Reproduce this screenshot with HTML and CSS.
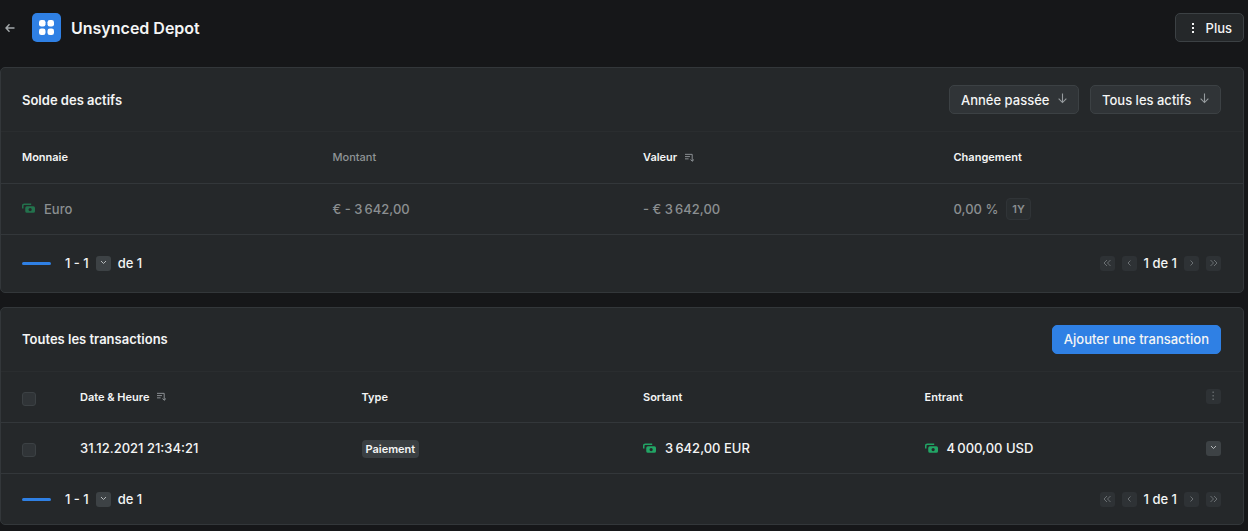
FILE: index.html
```html
<!DOCTYPE html>
<html lang="fr">
<head>
   <meta charset="UTF-8">
   <meta name="viewport" content="width=device-width, initial-scale=1.0">
   <title>Unsynced Depot</title>
   <link rel="stylesheet" href="styles.css">
</head>
<body>
   <!-- shared icons -->
   <svg class="sprite" aria-hidden="true">
      <symbol id="arrow-down" viewBox="0 0 10 10"><path d="M5 0.500v8M1.500 5.200L5 8.700l3.500-3.500"/></symbol>
      <symbol id="chevron-down" viewBox="0 0 15 15"><path d="M5 5l2.500 2.500L10 5"/></symbol>
      <symbol id="chevron-left" viewBox="0 0 15 15"><path d="M8.500 4.500l-2.500 2.500 2.500 2.500"/></symbol>
      <symbol id="chevron-right" viewBox="0 0 15 15"><path d="M6.500 4.500l2.500 2.500-2.500 2.500"/></symbol>
      <symbol id="first" viewBox="0 0 15 15"><path d="M7 4L4 7l3 3M10.500 4l-3 3 3 3"/></symbol>
      <symbol id="last" viewBox="0 0 15 15"><path d="M4.500 4l3 3-3 3M8 4l3 3-3 3"/></symbol>
      <symbol id="dots" viewBox="0 0 15 15"><path d="M6.500 2.500h1.300v1.500h-1.300zM6.500 6h1.300v1.500h-1.300zM6.500 9.500h1.300v1.500h-1.300z"/></symbol>
      <symbol id="sort" viewBox="0 0 10 10"><path d="M0 1.500h8v7.500M0 4h5.500M0 6.500h4M6 7.200l2 2 2-2"/></symbol>
      <symbol id="cash" viewBox="0 0 12 10">
         <path d="M0.700 5V2.500Q0.700 1 2.200 1H8.500" fill="none" stroke="currentColor" stroke-width="1.400"/>
         <path fill="currentColor" fill-rule="evenodd" d="M4.500 3h6A1.500 1.500 0 0 1 12 4.500v3A1.500 1.500 0 0 1 10.500 9h-6A1.500 1.500 0 0 1 3 7.500v-3A1.500 1.500 0 0 1 4.500 3zM7.500 4.500a1.500 1.500 0 1 0 0 3 1.500 1.500 0 0 0 0-3z"/>
      </symbol>
   </svg>

   <header class="page-header">
      <a class="back" href="#" aria-label="Retour">
         <svg width="10" height="10" viewBox="0 0 10 10"><path d="M9.500 5H1M4.500 1.200L1 5l3.500 3.800"/></svg>
      </a>
      <svg class="logo" width="29" height="29" viewBox="0 0 29 29">
         <rect width="29" height="29" rx="5"/>
         <g fill="#fff">
            <rect x="7" y="7" width="6.500" height="6.500" rx="2.300"/>
            <rect x="15.500" y="7" width="6.500" height="6.500" rx="2.300"/>
            <rect x="7" y="15.500" width="6.500" height="6.500" rx="2.300"/>
            <rect x="15.500" y="15.500" width="6.500" height="6.500" rx="2.300"/>
         </g>
      </svg>
      <h1>Unsynced Depot</h1>
      <button class="btn btn-more" type="button">
         <svg width="12" height="12" viewBox="0 0 12 12"><path d="M5 1h2v2h-2zM5 5h2v2h-2zM5 9h2v2h-2z"/></svg>
         Plus
      </button>
   </header>

   <main>
      <section class="panel">
         <div class="panel-header">
            <h2>Solde des actifs</h2>
            <div class="dropdown">
               <select class="btn" aria-label="Période">
                  <option>Année passée</option>
                  <option>Mois passé</option>
               </select>
               <svg class="icon"><use href="#arrow-down"/></svg>
            </div>
            <div class="dropdown">
               <select class="btn" aria-label="Actifs">
                  <option>Tous les actifs</option>
                  <option>Monnaies</option>
               </select>
               <svg class="icon"><use href="#arrow-down"/></svg>
            </div>
         </div>
         <table>
            <thead>
               <tr>
                  <th>Monnaie</th>
                  <th class="muted">Montant</th>
                  <th><span class="cell">Valeur <svg class="icon sort"><use href="#sort"/></svg></span></th>
                  <th>Changement</th>
               </tr>
            </thead>
            <tbody>
               <tr class="faded">
                  <td><span class="cell"><svg class="cash"><use href="#cash"/></svg>Euro</span></td>
                  <td>€ - 3&#8239;642,00</td>
                  <td>- € 3&#8239;642,00</td>
                  <td><span class="cell">0,00 % <span class="period">1Y</span></span></td>
               </tr>
            </tbody>
         </table>
         <div class="panel-footer tall">
            <span class="progress"></span>
            <span>1 - 1</span>
            <button class="mini" type="button" aria-label="Lignes par page"><svg><use href="#chevron-down"/></svg></button>
            <span>de 1</span>
            <nav class="pager" aria-label="Pages des actifs">
               <button class="mini" type="button" disabled aria-label="Première page"><svg><use href="#first"/></svg></button>
               <button class="mini" type="button" disabled aria-label="Page précédente"><svg><use href="#chevron-left"/></svg></button>
               <span>1 de 1</span>
               <button class="mini" type="button" disabled aria-label="Page suivante"><svg><use href="#chevron-right"/></svg></button>
               <button class="mini" type="button" disabled aria-label="Dernière page"><svg><use href="#last"/></svg></button>
            </nav>
         </div>
      </section>

      <section class="panel">
         <div class="panel-header">
            <h2>Toutes les transactions</h2>
            <button class="btn btn-primary" type="button">Ajouter une transaction</button>
         </div>
         <table>
            <thead>
               <tr>
                  <th class="narrow"><input type="checkbox" aria-label="Tout sélectionner"></th>
                  <th><span class="cell">Date &amp; Heure <svg class="icon sort"><use href="#sort"/></svg></span></th>
                  <th>Type</th>
                  <th>Sortant</th>
                  <th>Entrant</th>
                  <th class="narrow"><button class="mini" type="button" disabled aria-label="Actions"><svg class="solid"><use href="#dots"/></svg></button></th>
               </tr>
            </thead>
            <tbody>
               <tr>
                  <td><input type="checkbox" aria-label="Sélectionner la transaction"></td>
                  <td>31.12.2021 21:34:21</td>
                  <td><span class="tag">Paiement</span></td>
                  <td><span class="cell"><svg class="cash"><use href="#cash"/></svg>3&#8239;642,00 EUR</span></td>
                  <td><span class="cell"><svg class="cash"><use href="#cash"/></svg>4&#8239;000,00 USD</span></td>
                  <td><button class="mini" type="button" aria-label="Ouvrir le menu"><svg><use href="#chevron-down"/></svg></button></td>
               </tr>
            </tbody>
         </table>
         <div class="panel-footer">
            <span class="progress"></span>
            <span>1 - 1</span>
            <button class="mini" type="button" aria-label="Lignes par page"><svg><use href="#chevron-down"/></svg></button>
            <span>de 1</span>
            <nav class="pager" aria-label="Pages des transactions">
               <button class="mini" type="button" disabled aria-label="Première page"><svg><use href="#first"/></svg></button>
               <button class="mini" type="button" disabled aria-label="Page précédente"><svg><use href="#chevron-left"/></svg></button>
               <span>1 de 1</span>
               <button class="mini" type="button" disabled aria-label="Page suivante"><svg><use href="#chevron-right"/></svg></button>
               <button class="mini" type="button" disabled aria-label="Dernière page"><svg><use href="#last"/></svg></button>
            </nav>
         </div>
      </section>
   </main>
</body>
</html>
```
FILE: styles.css
```css
* {
   box-sizing: border-box;
}

body {
   margin: 0;
   padding: 0 4px 0 0;
   background: #161719;
   color: #f4f5f5;
   font-family: Inter, sans-serif;
   font-size: 13px;
   font-weight: 500;
   line-height: 20px;
}

button, select, input {
   margin: 0;
   font: inherit;
   color: inherit;
}

h1, h2 {
   margin: 0;
   font-weight: 600;
}

h1 {
   font-size: 16px;
}

h2 {
   font-size: 13px;
   margin-right: auto;
}

svg {
   flex: none;
   fill: none;
   stroke: currentColor;
}

.sprite {
   display: none;
}

.page-header {
   display: flex;
   align-items: center;
   padding: 13px 0 25px 5px;
}

.back {
   display: flex;
   color: #a3a8aa;
}

.back svg {
   stroke-width: 1.4;
}

.logo {
   margin: 0 10px 0 17px;
   fill: #2f80e4;
   stroke: none;
}

.btn {
   height: 29px;
   padding: 0 11px;
   border: 1px solid #3c4144;
   border-radius: 5px;
   background: #303437;
}

.btn-more {
   display: flex;
   align-items: center;
   gap: 7px;
   margin-left: auto;
   background: #25282a;
}

.btn-more svg {
   fill: currentColor;
   stroke: none;
}

.btn-primary {
   border-color: #2f80e4;
   background: #2f80e4;
}

.panel {
   margin-bottom: 14px;
   border: 1px solid #33373a;
   border-radius: 5px;
   background: #25282a;
}

.panel-header {
   display: flex;
   align-items: center;
   gap: 11px;
   height: 64px;
   padding: 0 22px 0 21px;
   border-bottom: 1px solid #2a2d2f;
}

.dropdown {
   position: relative;
}

.dropdown select {
   display: block;
   appearance: none;
   padding-right: 28px;
}

/* arrow sits over the select */
.dropdown .icon {
   position: absolute;
   top: 8px;
   right: 11px;
   pointer-events: none;
}

.icon {
   width: 11px;
   height: 11px;
   color: #969b9e;
   overflow: visible;
}

.sort {
   width: 9px;
   height: 9px;
}

table {
   width: 100%;
   border-collapse: collapse;
   table-layout: fixed;
}

tr {
   height: 51px;
   border-bottom: 1px solid #33373a;
}

th, td {
   padding: 0 21px;
   text-align: left;
}

th {
   font-size: 11px;
   font-weight: 600;
}

.muted {
   color: #8f9496;
   font-weight: 500;
}

.faded {
   color: #8b8f91;
}

.narrow {
   width: 58px;
}

.cell {
   display: flex;
   align-items: center;
   gap: 8px;
}

.cash {
   width: 13px;
   height: 11px;
   margin-right: 1px;
   color: #22a565;
   stroke: none;
}

.faded .cash {
   opacity: 0.6;
}

.period {
   padding: 0 5px;
   border: 1px solid #303437;
   border-radius: 4px;
   background: #292d2f;
   font-size: 11px;
   font-weight: 600;
}

.tag {
   display: inline-block;
   padding: 0 4px;
   border-radius: 4px;
   background: #3a3f42;
   font-size: 11px;
   font-weight: 600;
   line-height: 18px;
}

.mini {
   display: block;
   width: 15px;
   height: 15px;
   padding: 0;
   border: 0;
   border-radius: 3px;
   background: #3d4245;
   color: #b5b9bb;
}

.mini svg {
   display: block;
   width: 15px;
   height: 15px;
}

.mini .solid {
   fill: currentColor;
   stroke: none;
}

.mini:disabled {
   background: #2e3235;
   color: #6a6f72;
}

input[type="checkbox"] {
   display: block;
   appearance: none;
   width: 14px;
   height: 14px;
   margin-top: 4px;
   border: 1px solid #3c4144;
   border-radius: 3px;
   background: #303437;
}

.panel-footer {
   display: flex;
   align-items: center;
   gap: 7px;
   height: 50px;
   padding: 0 22px 0 21px;
}

.panel-footer.tall {
   height: 57px;
}

.progress {
   width: 29px;
   height: 3px;
   margin-right: 7px;
   border-radius: 2px;
   background: #2f80e4;
}

.pager {
   display: flex;
   align-items: center;
   gap: 7px;
   margin-left: auto;
}
```
